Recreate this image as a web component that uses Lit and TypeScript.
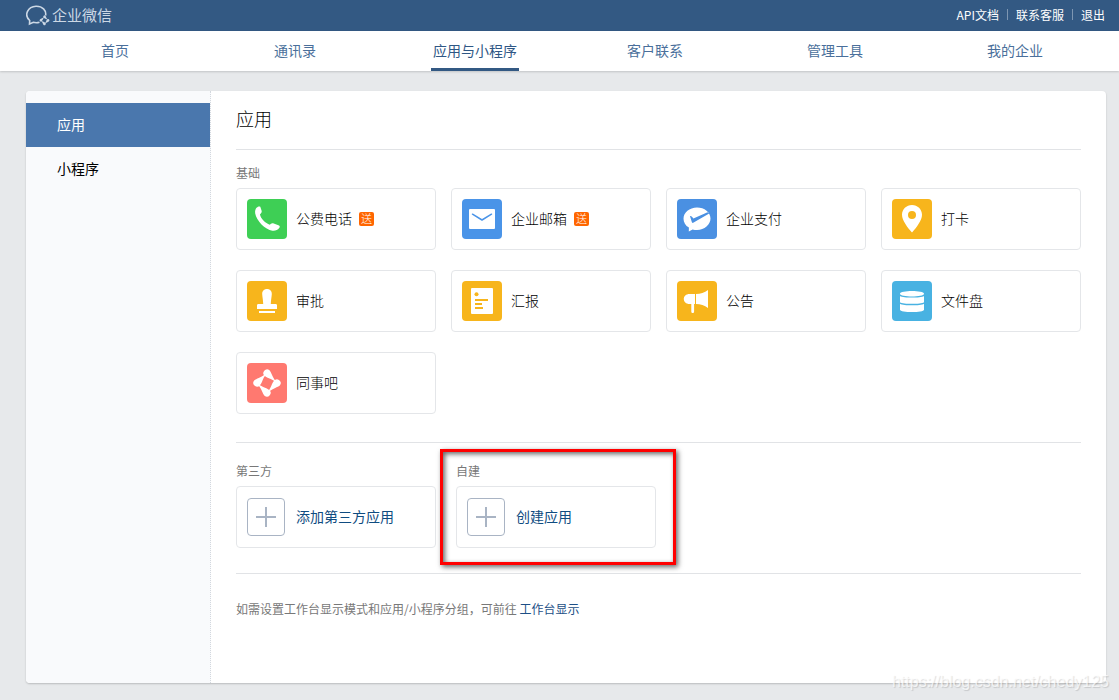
import { LitElement, html, css, svg, nothing } from "lit";
import { customElement, property } from "lit/decorators.js";
import { classMap } from "lit/directives/class-map.js";

const drops = [0, 90, 180, 270].map(
  (turn) => svg`<path transform="rotate(${turn} 20 20)" d="M7.200 17.500C9.500 15.500 13.500 15 18 11.300L18.600 12C15.400 16 15.500 19.200 13 22.200A3.700 3.700 0 1 1 7.200 17.500z"/>`
);

const glyphs: Record<string, unknown> = {
  phone: svg`<path d="M9.8 8.6c1-1 2.600-1.600 3.500-.8l1.400 4.200c.3 1.500-1 2.700-1.700 3.300.3 4.200 5.700 9.200 9.800 10.400.9-.9 1.900-1.900 3.300-1.400l5.300 1.900c1.700.6 1.700 1.600.8 2.800-1.600 2-3.900 3.100-6.800 2.700C18 30.600 9.500 21.800 8.200 14.500c-.4-2.700.3-4.600 1.600-5.900z"/>`,
  mail: svg`<rect x="7" y="10" width="26" height="20" rx="1"/><path d="M10.500 15.200 20 21l9.500-5.800" fill="none" stroke="#4a94e8" stroke-width="1.500" stroke-linecap="round" stroke-linejoin="round"/>`,
  pay: svg`<path d="M20 8.500c7.500 0 13.500 4.900 13.500 11S27.500 31 20 31c-1.500 0-3-.2-4.400-.6L11.800 32.400l.1-3.800C8.500 26.500 6.500 23.300 6.500 19.700 6.500 13.500 12.500 8.500 20 8.500z"/><path d="M13 17.200c.8-.5 1.600.1 3.400 2.200L30.600 13.200 32.200 14.600 16.200 23.800c-.6.3-1 .1-1.300-.5z" fill="#4a90e2"/>`,
  pin: svg`<path fill-rule="evenodd" d="M20 6c5.600 0 10 4.400 10 9.800 0 5.700-5.500 12.700-10 17.700-4.500-5-10-12-10-17.700C10 10.400 14.400 6 20 6zm0 6a4 4 0 1 0 0 8 4 4 0 0 0 0-8z"/>`,
  stamp: svg`<path d="M20 8c3 0 5 2.200 4.800 5.200-.2 3-.9 5.800-1 9.800h4.700c1 0 1.500.5 1.500 1.500V28H10v-3.500c0-1 .5-1.500 1.500-1.500h4.700c-.1-4-.8-6.800-1-9.800C15 10.200 17 8 20 8zM12 30h16v2H12z"/>`,
  report: svg`<rect x="9" y="7" width="22" height="26" rx="1"/><circle cx="14.500" cy="13.300" r="2" fill="#f7b51c"/><path d="M13 18h13v2H13zM13 22h7v2H13zM13 26h8v2H13z" fill="#f7b51c"/>`,
  horn: svg`<path d="M12.500 13H18v10h-.9v7.500c0 2-2.800 2-2.800 0V23h-1.800C9 23 6.800 20.800 6.800 18S9 13 12.500 13zM19 13c4.500-.1 8.500-1.500 12-4v18c-3.500-2.500-7.500-3.900-12-4z"/>`,
  disk: svg`<path d="M8 12.700C8 9.100 32 9.100 32 12.700S8 16.300 8 12.700zM8 14.900c3.500 2.200 20.500 2.200 24 0v6.300c-3 2.200-21 2.200-24 0zM8 22.700c3.500 2.200 20.500 2.200 24 0v6c0 3.100-24 3.100-24 0z"/>`,
  ring: svg`${drops}`,
};

@customElement("app-tile")
class AppTile extends LitElement {
  @property() label = "";
  @property() icon = "";
  @property() tone = "";
  @property({ type: Boolean }) gift = false;

  static styles = css`
    :host { display: block; }
    .tile {
      display: flex; align-items: center; gap: 9px; box-sizing: border-box;
      height: 62px; padding: 0 10px; border: 1px solid #e4e6e9; border-radius: 4px;
      background: #fff; color: #000; font-size: 14px; line-height: 20px; font-weight: 300;
      text-decoration: none;
    }
    .label { padding-bottom: 2px; }
    .icon { width: 40px; height: 40px; border-radius: 4px; fill: #fff; flex: none; }
    .green { background: #3ecf55; }
    .blue { background: #4a94e8; }
    .navy { background: #4a90e2; }
    .amber { background: #f7b51c; }
    .sky { background: #48b2e2; }
    .coral { background: #ff7970; }
    .badge {
      width: 15px; height: 14px; margin-left: -2px; border-radius: 2px; background: #ff6600;
      color: #fff; font-size: 11px; line-height: 13px; text-align: center;
    }
    .add { gap: 11px; color: #0f4c81; font-weight: 400; }
    .plus { width: 38px; height: 38px; flex: none; fill: none; stroke: #a9b4c4; }
  `;

  render() {
    if (this.icon === "plus") {
      return html`<a class="tile add" href="#">
        <svg class="plus" viewBox="0 0 38 38" aria-hidden="true">
          <rect x=".5" y=".5" width="37" height="37" rx="3.500"/>
          <path d="M9 19h20M19 9v20" stroke-width="2"/>
        </svg><span class="label">${this.label}</span></a>`;
    }
    return html`<a class="tile" href="#">
      <svg class=${classMap({ icon: true, [this.tone]: true })} viewBox="0 0 40 40" aria-hidden="true">${glyphs[this.icon]}</svg>
      <span class="label">${this.label}</span>
      ${this.gift ? html`<span class="badge">送</span>` : nothing}
    </a>`;
  }
}

const tabs = ["首页", "通讯录", "应用与小程序", "客户联系", "管理工具", "我的企业"];

const basics = [
  { label: "公费电话", icon: "phone", tone: "green", gift: true },
  { label: "企业邮箱", icon: "mail", tone: "blue", gift: true },
  { label: "企业支付", icon: "pay", tone: "navy" },
  { label: "打卡", icon: "pin", tone: "amber" },
  { label: "审批", icon: "stamp", tone: "amber" },
  { label: "汇报", icon: "report", tone: "amber" },
  { label: "公告", icon: "horn", tone: "amber" },
  { label: "文件盘", icon: "disk", tone: "sky" },
  { label: "同事吧", icon: "ring", tone: "coral" },
];

@customElement("app-root")
class AppRoot extends LitElement {
  static styles = css`
    :host {
      display: flex; flex-direction: column; position: relative; min-height: 100vh;
      box-sizing: border-box; background: #e7e9eb; color: #000;
      font-family: "Noto Sans CJK SC", "Noto Sans", sans-serif; font-size: 14px; line-height: 20px;
    }
    a { text-decoration: none; color: inherit; }
    .top {
      display: flex; align-items: center; justify-content: space-between; box-sizing: border-box;
      height: 31px; padding: 0 14px 2px 26px; background: #335983; color: #fff;
    }
    .brand { display: flex; align-items: center; gap: 2px; color: #ccd8e5; font-size: 15px; }
    .logo { width: 24px; height: 22px; fill: none; stroke: #ccd8e5; stroke-width: 1.600; }
    .spark { fill: #ccd8e5; stroke: none; }
    .links { display: flex; align-items: center; gap: 8px; font-size: 12px; }
    .bar { width: 1px; height: 11px; background: #7d96b2; }
    .nav {
      display: grid; grid-template-columns: repeat(6, 1fr); justify-items: center;
      height: 40px; padding: 0 14px 0 25px; background: #fff; color: #4a6f9b;
      box-shadow: 0 1px 2px rgba(0, 0, 0, .16);
    }
    .tab { box-sizing: border-box; height: 40px; padding: 0 2px; line-height: 38px; }
    .tab.on { border-bottom: 3px solid #335983; color: #2f5785; }
    .panel {
      display: flex; flex: 1; margin: 20px 13px 17px 26px; border-radius: 4px;
      background: #fff; box-shadow: 0 1px 2px rgba(0, 0, 0, .2); overflow: hidden;
    }
    .side { width: 184px; flex: none; padding-top: 12px; background: #f9fafc; border-right: 1px dotted #d3d8de; }
    .item { display: block; padding: 0 0 2px 31px; line-height: 42px; }
    .item.on { background: #4a77ad; color: #fff; }
    .main { flex: 1; min-width: 0; padding: 0 25px; }
    .title { margin: 0; padding: 14px 0 18px; font-size: 18px; line-height: 26px; font-weight: 300; }
    .part { border-top: 1px solid #e1e3e6; }
    .caption { margin: 0 0 6px; color: #787878; font-size: 12px; line-height: 18px; font-weight: 400; }
    .basic { padding: 14px 0 28px; }
    .grid { display: grid; grid-template-columns: repeat(4, 1fr); gap: 20px 15px; }
    .extra { display: grid; grid-template-columns: 200px 200px; gap: 20px; padding: 19px 0 25px; }
    .marked { position: relative; }
    .marked::after {
      content: ""; position: absolute; top: -13px; right: -20px; bottom: -17px; left: -16px;
      border: 3px solid #f00; pointer-events: none;
      box-shadow: 2px 2px 5px rgba(0, 0, 0, .6), inset 2px 2px 5px rgba(0, 0, 0, .6);
    }
    .note { margin: 0; padding: 25px 0; color: #787878; font-size: 12px; }
    .note a { color: #1d4f86; }
    .watermark {
      position: absolute; right: 10px; bottom: 8px; color: rgba(255, 255, 255, .7);
      font-family: "Liberation Sans", sans-serif; font-size: 16px; line-height: 20px;
      text-shadow: 1px 1px 1px rgba(0, 0, 0, .14); pointer-events: none;
    }
  `;

  render() {
    return html`
      <header class="top">
        <a class="brand" href="#">
          <svg class="logo" viewBox="0 0 24 22" aria-hidden="true">
            <path d="M13.500 18.200c-2 .6-4.300.6-6.200.1L3.500 20l.2-3.500C-2.500 11 2 2.500 10 2.200c6.500-.2 10.500 4.300 9.600 9.300"/>
            <g class="spark" transform="translate(18.500 16.300) scale(.36) translate(-20 -20)">${drops}</g>
          </svg>
          <span>企业微信</span>
        </a>
        <div class="links">
          <a href="#">API文档</a><span class="bar"></span><a href="#">联系客服</a><span class="bar"></span><a href="#">退出</a>
        </div>
      </header>
      <nav class="nav">
        ${tabs.map((t, i) => html`<a href="#" class=${classMap({ tab: true, on: i === 2 })}>${t}</a>`)}
      </nav>
      <div class="panel">
        <aside class="side">
          <a class="item on" href="#">应用</a>
          <a class="item" href="#">小程序</a>
        </aside>
        <main class="main">
          <h1 class="title">应用</h1>
          <section class="part basic">
            <h2 class="caption">基础</h2>
            <div class="grid">
              ${basics.map((b) => html`<app-tile .label=${b.label} .icon=${b.icon} .tone=${b.tone} .gift=${!!b.gift}></app-tile>`)}
            </div>
          </section>
          <div class="part extra">
            <section>
              <h2 class="caption">第三方</h2>
              <app-tile label="添加第三方应用" icon="plus"></app-tile>
            </section>
            <section class="marked">
              <h2 class="caption">自建</h2>
              <app-tile label="创建应用" icon="plus"></app-tile>
            </section>
          </div>
          <p class="part note">如需设置工作台显示模式和应用/小程序分组，可前往 <a href="#">工作台显示</a></p>
        </main>
      </div>
      <div class="watermark">https://blog.csdn.net/chedy125</div>
    `;
  }
}
